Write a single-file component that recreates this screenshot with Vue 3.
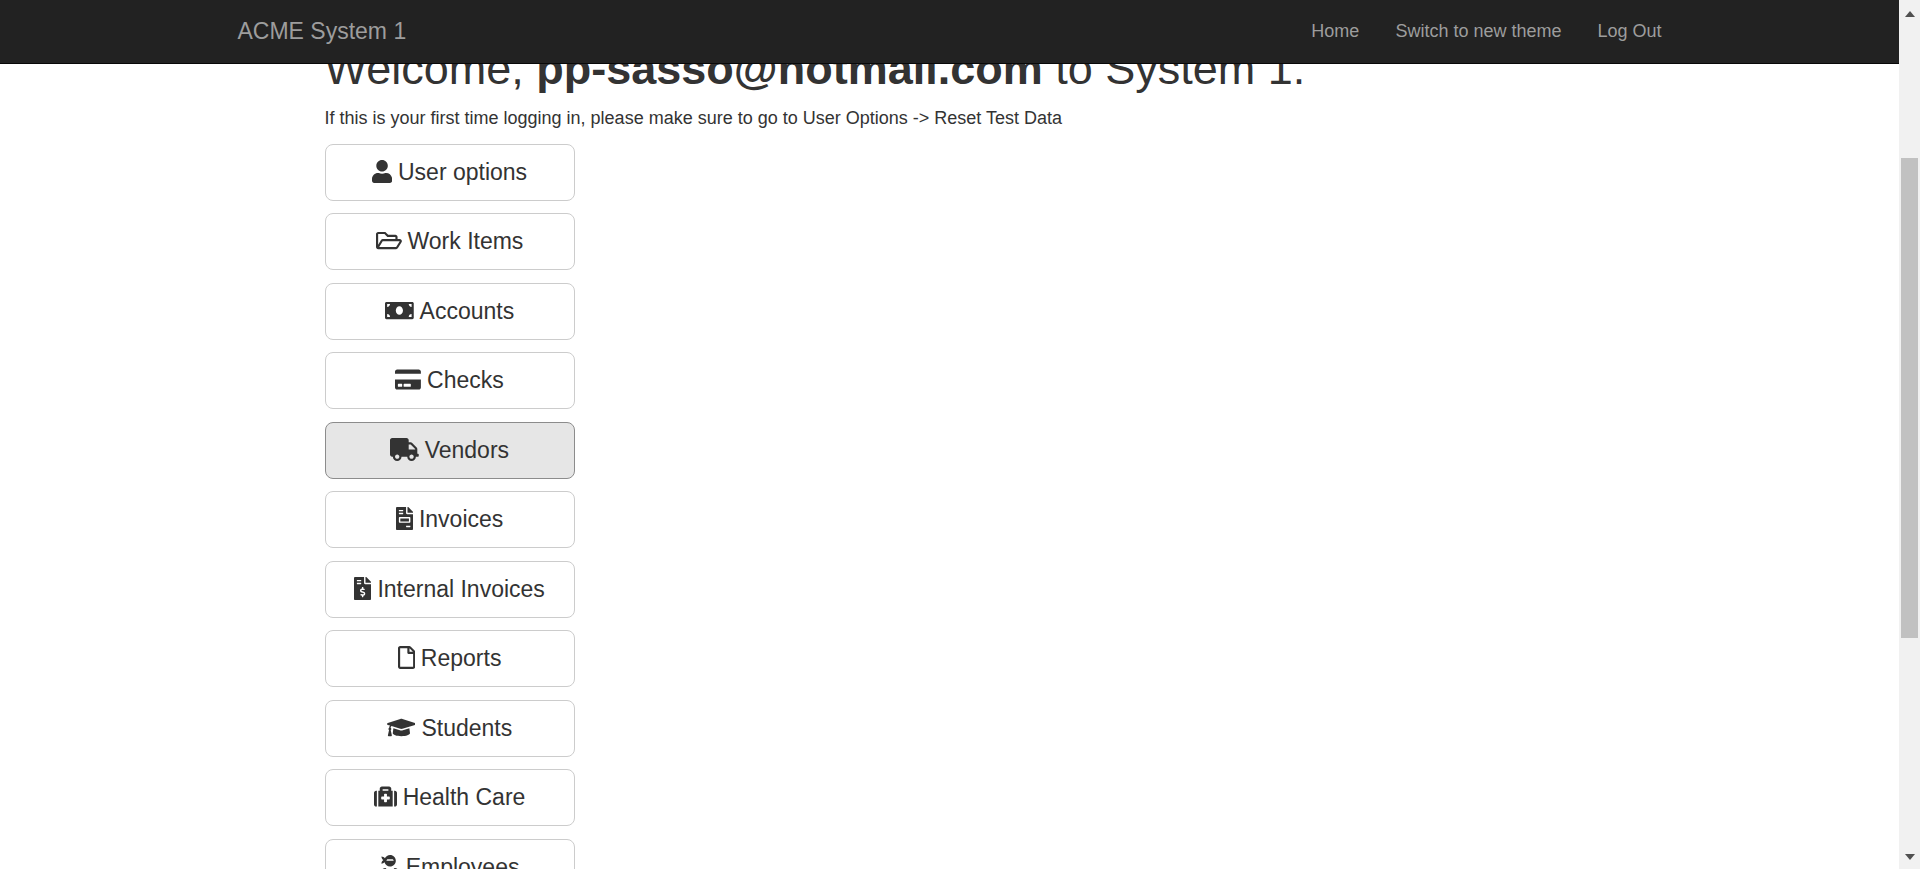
<script setup>
const navLinks = ['Home', 'Switch to new theme', 'Log Out']

const filePage =
  'M377 105L279.1 7c-4.5-4.5-10.6-7-17-7H256v128h128v-6.1c0-6.3-2.5-12.4-7-16.9zm-153 31V0H24C10.7 0 0 10.7 0 24v464c0 13.3 10.7 24 24 24h336c13.3 0 24-10.7 24-24V160H248c-13.2 0-24-10.8-24-24zM64 72c0-4.42 3.58-8 8-8h80c4.42 0 8 3.58 8 8v16c0 4.42-3.58 8-8 8H72c-4.42 0-8-3.58-8-8V72zm0 64c0-4.42 3.58-8 8-8h80c4.42 0 8 3.58 8 8v16c0 4.42-3.58 8-8 8H72c-4.42 0-8-3.58-8-8v-16z'

const items = [
  {
    label: 'User options',
    width: 448,
    path: 'M224 256c70.7 0 128-57.3 128-128S294.7 0 224 0 96 57.3 96 128s57.3 128 128 128zm89.6 32h-16.7c-22.2 10.2-46.9 16-72.9 16s-50.6-5.8-72.9-16h-16.7C60.2 288 0 348.2 0 422.4V464c0 26.5 21.5 48 48 48h352c26.5 0 48-21.5 48-48v-41.6c0-74.2-60.2-134.4-134.4-134.4z',
  },
  {
    label: 'Work Items',
    width: 576,
    path: 'M527.9 224H480v-48c0-26.5-21.5-48-48-48H272l-64-64H48C21.5 64 0 85.5 0 112v288c0 26.5 21.5 48 48 48h400c16.5 0 31.9-8.5 40.7-22.6l79.9-128c20-31.9-3-73.4-40.7-73.4zM48 118c0-3.3 2.7-6 6-6h134.1l64 64H426c3.3 0 6 2.7 6 6v42H152c-16.8 0-32.4 8.8-41.1 23.2L48 351.4zm400 282H72l77.2-128H528z',
  },
  {
    label: 'Accounts',
    width: 640,
    path: 'M608 64H32C14.33 64 0 78.33 0 96v320c0 17.67 14.33 32 32 32h576c17.67 0 32-14.33 32-32V96c0-17.67-14.33-32-32-32zM48 400v-64c35.35 0 64 28.65 64 64H48zm0-224v-64h64c0 35.35-28.65 64-64 64zm272 176c-44.19 0-80-42.99-80-96 0-53.02 35.82-96 80-96s80 42.98 80 96c0 53.03-35.83 96-80 96zm272 48h-64c0-35.35 28.65-64 64-64v64zm0-224c-35.35 0-64-28.65-64-64h64v64z',
  },
  {
    label: 'Checks',
    width: 576,
    path: 'M0 432c0 26.5 21.5 48 48 48h480c26.5 0 48-21.5 48-48V256H0v176zm192-68c0-6.6 5.4-12 12-12h136c6.6 0 12 5.4 12 12v40c0 6.6-5.4 12-12 12H204c-6.6 0-12-5.4-12-12v-40zm-128 0c0-6.6 5.4-12 12-12h72c6.6 0 12 5.4 12 12v40c0 6.6-5.4 12-12 12H76c-6.6 0-12-5.4-12-12v-40zM576 80v48H0V80c0-26.5 21.5-48 48-48h480c26.5 0 48 21.5 48 48z',
  },
  {
    label: 'Vendors',
    width: 640,
    active: true,
    path: 'M624 352h-16V243.9c0-12.7-5.1-24.9-14.1-33.9L494 110.1c-9-9-21.2-14.1-33.9-14.1H416V48c0-26.5-21.5-48-48-48H48C21.5 0 0 21.5 0 48v320c0 26.5 21.5 48 48 48h16c0 53 43 96 96 96s96-43 96-96h128c0 53 43 96 96 96s96-43 96-96h48c8.8 0 16-7.2 16-16v-32c0-8.8-7.2-16-16-16zM160 464c-26.5 0-48-21.5-48-48s21.5-48 48-48 48 21.5 48 48-21.5 48-48 48zm320 0c-26.5 0-48-21.5-48-48s21.5-48 48-48 48 21.5 48 48-21.5 48-48 48zm80-208H416V144h44.1l99.9 99.9V256z',
  },
  {
    label: 'Invoices',
    width: 384,
    path: filePage + 'M288 256H96v64h192v-64zM320 440c0 4.42-3.58 8-8 8h-80c-4.42 0-8-3.58-8-8v-16c0-4.42 3.58-8 8-8h80c4.42 0 8 3.58 8 8v16zm0-200v96c0 8.84-7.16 16-16 16H80c-8.84 0-16-7.16-16-16v-96c0-8.84 7.16-16 16-16h224c8.84 0 16 7.16 16 16z',
  },
  {
    label: 'Internal Invoices',
    width: 384,
    path: filePage + 'M208 415.88V440c0 4.42-3.58 8-8 8h-16c-4.42 0-8-3.58-8-8v-24.29c-11.29-.58-22.27-4.52-31.37-11.35-3.9-2.93-4.1-8.77-.57-12.14l11.75-11.21c2.77-2.64 6.89-2.76 10.13-.73 3.87 2.42 8.26 3.72 12.82 3.72h28.11c6.5 0 11.8-5.92 11.8-13.19 0-5.95-3.61-11.19-8.77-12.73l-45-13.5c-18.59-5.58-31.58-23.42-31.58-43.39 0-24.52 19.05-44.44 42.67-45.07V232c0-4.42 3.58-8 8-8h16c4.42 0 8 3.58 8 8v24.29c11.29.58 22.27 4.51 31.37 11.35 3.9 2.93 4.1 8.77.57 12.14l-11.75 11.21c-2.77 2.64-6.89 2.76-10.13.73-3.87-2.43-8.26-3.72-12.82-3.72h-28.11c-6.5 0-11.8 5.92-11.8 13.19 0 5.95 3.61 11.19 8.77 12.73l45 13.5c18.59 5.58 31.58 23.42 31.58 43.39 0 24.53-19.05 44.44-42.67 45.07z',
  },
  {
    label: 'Reports',
    width: 384,
    path: 'M369.9 97.9L286 14C277 5 264.8 0 252.1 0H48C21.5 0 0 21.5 0 48v416c0 26.5 21.5 48 48 48h288c26.5 0 48-21.5 48-48V131.9c0-12.7-5.1-25-14.1-34zM332.1 128H256V51.9l76.1 76.1zM48 464V48h160v104c0 13.3 10.7 24 24 24h104v288H48z',
  },
  {
    label: 'Students',
    width: 640,
    path: 'M622.34 153.2L343.4 67.5c-15.2-4.67-31.6-4.67-46.79 0L17.66 153.2c-23.54 7.23-23.54 38.36 0 45.59l48.63 14.94c-10.67 13.19-17.23 29.28-17.88 46.9C38.78 266.15 32 276.11 32 288c0 10.78 5.68 19.85 13.86 25.65L20.33 428.53C18.11 438.52 25.71 448 35.94 448h56.11c10.24 0 17.84-9.48 15.62-19.47L82.14 313.65C90.32 307.85 96 298.78 96 288c0-11.57-6.47-21.25-15.66-26.87.76-15.02 8.44-28.3 20.69-36.72L296.6 284.5c9.06 2.78 26.44 6.25 46.79 0l278.95-85.7c23.55-7.24 23.55-38.36 0-45.6zM352.79 315.09c-28.53 8.76-52.84 3.92-65.59 0l-145.02-44.55L128 384c0 35.35 85.96 64 192 64s192-28.65 192-64l-14.18-113.47-145.03 44.56z',
  },
  {
    label: 'Health Care',
    width: 512,
    path: 'M96 480h320V128h-32V80c0-26.51-21.49-48-48-48H176c-26.51 0-48 21.49-48 48v48H96v352zm96-384h128v32H192V96zm320 80v256c0 26.51-21.49 48-48 48h-16V128h16c26.51 0 48 21.49 48 48zM64 480H48c-26.51 0-48-21.49-48-48V176c0-26.51 21.49-48 48-48h16v352zm288-208v32c0 8.837-7.163 16-16 16h-48v48c0 8.837-7.163 16-16 16h-32c-8.837 0-16-7.163-16-16v-48h-48c-8.837 0-16-7.163-16-16v-32c0-8.837 7.163-16 16-16h48v-48c0-8.837 7.163-16 16-16h32c8.837 0 16 7.163 16 16v48h48c8.837 0 16 7.163 16 16z',
  },
  {
    label: 'Employees',
    width: 448,
    path: 'M325.4 289.2L224 390.6 122.6 289.2C54 295.3 0 352.2 0 422.4V464c0 26.5 21.5 48 48 48h352c26.5 0 48-21.5 48-48v-41.6c0-70.2-54-127.1-122.6-133.2zM32 192c27.3 0 51.8-11.5 69.2-29.7 15.1 53.9 64 93.7 122.8 93.7 70.7 0 128-57.3 128-128S294.7 0 224 0c-50.4 0-93.6 29.4-114.5 71.8C92.1 47.8 64 32 32 32c0 33.4 17.1 62.8 43.1 80-26 17.2-43.1 46.6-43.1 80zm144-96h96c17.7 0 32 14.3 32 32H144c0-17.7 14.3-32 32-32z',
  },
]
</script>

<template>
  <div class="window">
    <div class="page">
      <header class="navbar">
        <nav class="container nav-inner" aria-label="Main">
          <a class="brand" href="#">ACME System 1</a>
          <ul class="nav-links">
            <li v-for="link in navLinks" :key="link"><a href="#">{{ link }}</a></li>
          </ul>
        </nav>
      </header>

      <main class="container content">
        <h1>Welcome, <b>pp-sasso@hotmail.com</b> to System 1.</h1>
        <p>If this is your first time logging in, please make sure to go to User Options -&gt; Reset Test Data</p>
        <div class="menu">
          <button
            v-for="item in items"
            :key="item.label"
            type="button"
            class="btn"
            :class="{ active: item.active }"
          >
            <svg class="icon" :viewBox="`0 0 ${item.width} 512`" aria-hidden="true">
              <path :d="item.path" fill-rule="evenodd" />
            </svg>
            <span>{{ item.label }}</span>
          </button>
        </div>
      </main>
    </div>

    <div class="scrollbar" aria-hidden="true">
      <svg class="arrow" viewBox="0 0 10 6"><path d="M0 6L5 0L10 6Z" /></svg>
      <div class="track"><div class="thumb"></div></div>
      <svg class="arrow" viewBox="0 0 10 6"><path d="M0 0L5 6L10 0Z" /></svg>
    </div>
  </div>
</template>

<style>
body {
  margin: 0;
  background: #fff;
}
</style>

<style scoped>
.window {
  display: flex;
  height: 100vh;
  overflow: hidden;
  color: #333;
  font-family: "Liberation Sans", Arial, sans-serif;
  font-size: 18px;
}

.page {
  position: relative;
  flex: 1;
  min-width: 0;
  overflow: hidden;
}

.container {
  box-sizing: border-box;
  max-width: 1462px;
  margin: 0 auto;
  padding: 0 19px;
}

.navbar {
  position: absolute;
  top: 0;
  left: 0;
  right: 0;
  z-index: 1;
  background: #222;
  border-bottom: 1px solid #080808;
}

.nav-inner {
  display: flex;
  align-items: center;
  justify-content: space-between;
  min-height: 63px;
}

.navbar a {
  color: #9d9d9d;
  text-decoration: none;
}

.brand {
  font-size: 23px;
  line-height: 25px;
}

.nav-links {
  display: flex;
  gap: 36px;
  margin: 0;
  padding: 0;
  list-style: none;
  line-height: 25px;
}

.content {
  padding: 44px 106px 0;
}

h1 {
  margin: 0;
  font-size: 45px;
  font-weight: 400;
  line-height: 50px;
}

p {
  margin: 12px 0 13px;
  line-height: 25px;
}

.menu {
  display: flex;
  flex-direction: column;
  align-items: flex-start;
}

.btn {
  display: flex;
  align-items: center;
  justify-content: center;
  gap: 6px;
  box-sizing: border-box;
  width: 250px;
  margin: 0 0 12px;
  padding: 12px 20px 13px;
  border: 1px solid #ccc;
  border-radius: 8px;
  background: #fff;
  color: #333;
  font-family: inherit;
  font-size: 23px;
  line-height: 30px;
  white-space: nowrap;
}

.btn:nth-child(even) {
  margin-bottom: 13px;
}

.btn.active {
  border-color: #8c8c8c;
  background: #e6e6e6;
}

.icon {
  height: 23px;
  margin-bottom: 2px;
  fill: currentColor;
}

.scrollbar {
  display: flex;
  flex-direction: column;
  align-items: center;
  box-sizing: border-box;
  width: 21px;
  padding: 11px 0 9px;
  background: #f1f1f1;
}

.arrow {
  width: 10px;
  height: 6px;
  fill: #505050;
}

.track {
  display: grid;
  grid-template-rows: 141fr 480fr 216fr;
  flex: 1;
  align-self: stretch;
  padding: 0 2px;
}

.thumb {
  grid-row: 2;
  background: #c1c1c1;
}
</style>
